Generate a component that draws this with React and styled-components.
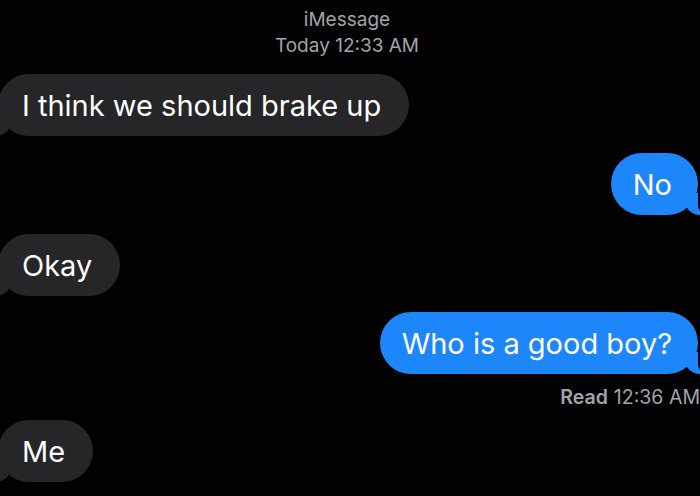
import React from 'react';
import styled, {createGlobalStyle} from 'styled-components';

const GlobalStyle = createGlobalStyle`
  html, body {
    margin: 0;
    padding: 0;
    background: #000;
  }
  body {
    font-family: Inter, "Liberation Sans", Arial, sans-serif;
    overflow: hidden;
  }
`

const Thread = styled.div`
  width: 700px;
  height: 496px;
  background: #020203;
  display: flex;
  flex-direction: column;
  padding-top: 7px;
  box-sizing: border-box;
  overflow: hidden;
`

const Header = styled.div`
  display: flex;
  flex-direction: column;
  align-items: center;
  color: #a3a3a8;
  font-size: 19px;
  line-height: 26px;
  padding-right: 6px;
  margin-bottom: 15px;
`

const Row = styled.div`
  display: flex;
  justify-content: ${props => props.$mine ? 'flex-end' : 'flex-start'};
  margin-bottom: ${props => props.$gap || 17}px;
`

const Bubble = styled.div`
  position: relative;
  height: 62px;
  display: flex;
  align-items: center;
  box-sizing: border-box;
  border-radius: 31px;
  font-size: 29px;
  color: #fff;
  background: ${props => props.$mine ? '#1e86fb' : '#262629'};
  padding: ${props => props.$mine ? '0 26px 0 22px' : '0 28px 0 24px'};
  margin: ${props => props.$mine ? '0 2px 0 0' : '0 0 0 -2px'};

  &::before {
    content: "";
    position: absolute;
    bottom: 0;
    height: 22px;
    width: 20px;
    background: ${props => props.$mine ? '#1e86fb' : '#262629'};
    ${props => props.$mine
      ? 'right: -7px; border-bottom-left-radius: 16px 14px;'
      : 'left: -7px; border-bottom-right-radius: 16px 14px;'}
  }

  &::after {
    content: "";
    position: absolute;
    bottom: 0;
    height: 22px;
    width: 10px;
    background: #020203;
    ${props => props.$mine
      ? 'right: -10px; border-bottom-left-radius: 10px;'
      : 'left: -10px; border-bottom-right-radius: 10px;'}
  }
`

const Receipt = styled.div`
  display: flex;
  justify-content: flex-end;
  gap: 6px;
  color: #a3a3a8;
  font-size: 19.5px;
  margin: 0 0 11px 0;

  b {
    font-weight: 600;
  }
`

export default function App() {
  return (
    <Thread>
      <GlobalStyle />
      <Header>
        <span>iMessage</span>
        <span>Today 12:33 AM</span>
      </Header>
      <Row>
        <Bubble>I think we should brake up</Bubble>
      </Row>
      <Row $mine $gap={19}>
        <Bubble $mine>No</Bubble>
      </Row>
      <Row $gap={16}>
        <Bubble>Okay</Bubble>
      </Row>
      <Row $mine $gap={11}>
        <Bubble $mine>Who is a good boy?</Bubble>
      </Row>
      <Receipt>
        <b>Read</b>
        <span>12:36 AM</span>
      </Receipt>
      <Row>
        <Bubble>Me</Bubble>
      </Row>
    </Thread>
  )
}
